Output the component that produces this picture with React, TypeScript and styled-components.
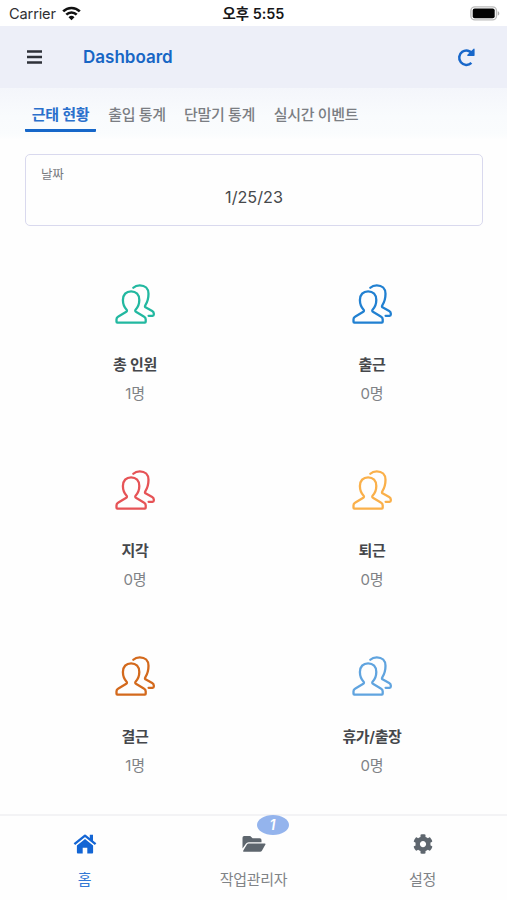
import React from 'react';
import styled, { createGlobalStyle } from 'styled-components';
import { FaCog } from 'react-icons/fa';

const GlobalStyle = createGlobalStyle`
  * { box-sizing: border-box; }
  body { margin: 0; background: #fff; }
  button { font: inherit; border: 0; padding: 0; background: none; }
`;

const Screen = styled.div`
  width: 507px;
  height: 900px;
  display: grid;
  grid-template-rows: 26px 62px 52px 86px 588px 86px;
  overflow: hidden;
  background: #fefefe;
  font-family: Inter, 'Noto Sans CJK KR', sans-serif;
  color: #43464b;
`;

const StatusBar = styled.div`
  display: grid;
  grid-template-columns: 1fr auto 1fr;
  align-items: center;
  padding: 1px 7px 0 9px;
  background: #fff;
`;

const Carrier = styled.div`
  display: flex;
  align-items: center;
  gap: 6px;
  font-size: 14.6px;
  letter-spacing: -0.15px;
  line-height: 20px;
  color: #303033;
`;

const Clock = styled.div`
  padding-right: 2px;
  font-size: 14.4px;
  font-weight: 600;
  line-height: 20px;
  color: #171719;
  white-space: nowrap;
`;

const BatterySlot = styled.div`
  display: flex;
  justify-content: flex-end;
`;

const Header = styled.header`
  display: flex;
  align-items: center;
  padding: 0 31px 0 27px;
  background: #edeff8;
`;

const Title = styled.h1`
  flex: 1;
  margin: 0 0 0 41px;
  font-size: 17px;
  font-weight: 600;
  line-height: 24px;
  color: #1766c5;
`;

const IconButton = styled.button`
  display: flex;
`;

const Tabs = styled.nav`
  display: flex;
  align-items: flex-start;
  padding: 10px 25px 0;
  background: linear-gradient(#f4f6fb, #f9fbfd 55%, #fafcfd 88%, #fefefe);
`;

const Tab = styled.button<{ $active?: boolean; $width: number }>`
  width: ${p => p.$width}px;
  height: 34px;
  font-size: 15px;
  font-weight: ${p => (p.$active ? 600 : 500)};
  letter-spacing: -0.3px;
  line-height: 31px;
  padding-top: 1px;
  white-space: nowrap;
  color: ${p => (p.$active ? '#2a70cc' : '#7b7e83')};
  border-bottom: 3px solid ${p => (p.$active ? '#1667c9' : 'transparent')};
  border-radius: 1px;
`;

const DateField = styled.div`
  height: 72px;
  margin: 14px 24px 0 25px;
  padding: 11px 15px 0;
  border: 1px solid #d9d9ee;
  border-radius: 5px;
`;

const DateLabel = styled.div`
  font-size: 12.5px;
  line-height: 18px;
  letter-spacing: -0.3px;
  color: #77797d;
`;

const DateValue = styled.div`
  margin-top: 1px;
  text-align: center;
  font-size: 16.2px;
  line-height: 24px;
  color: #46484b;
`;

const Stats = styled.main`
  display: grid;
  grid-template-columns: 237px 237px;
  grid-template-rows: repeat(3, 186px);
  justify-content: center;
  padding-top: 58px;
`;

const Stat = styled.section`
  display: flex;
  flex-direction: column;
  align-items: center;
`;

const StatName = styled.div`
  margin-top: 29px;
  font-size: 15px;
  font-weight: 600;
  line-height: 24px;
  letter-spacing: -0.35px;
  color: #45474b;
`;

const StatCount = styled.div`
  margin-top: 5px;
  font-size: 15px;
  line-height: 24px;
  letter-spacing: -0.2px;
  color: #7f8286;
`;

const BottomNav = styled.nav`
  display: grid;
  grid-template-columns: repeat(3, 1fr);
  border-top: 2px solid #f3f3f5;
`;

const NavItem = styled.button<{ $active?: boolean }>`
  display: flex;
  flex-direction: column;
  align-items: center;
  padding-top: 16px;
  color: ${p => (p.$active ? '#1365d4' : '#5e666e')};
`;

const NavIcon = styled.span`
  position: relative;
  display: flex;
  height: 24px;
  align-items: center;
`;

const NavLabel = styled.span<{ $active?: boolean }>`
  margin-top: 12px;
  font-size: 15px;
  line-height: 24px;
  letter-spacing: -0.3px;
  color: ${p => (p.$active ? '#3478d5' : '#808387')};
`;

const Badge = styled.span`
  position: absolute;
  left: 15px;
  top: -17px;
  width: 32px;
  height: 20px;
  border-radius: 50%;
  background: #94b4ed;
  color: #fff;
  font-size: 14px;
  font-weight: 600;
  font-style: italic;
  line-height: 20px;
  text-align: center;
`;

const WifiIcon = () => (
  <svg width="19" height="15" viewBox="0 0 19 15">
    <g fill="none" stroke="#111" strokeWidth="2.6">
      <path d="M1.2 5.4a11.8 11.8 0 0 1 16.6 0" />
      <path d="M4.3 8.7a7.4 7.4 0 0 1 10.4 0" />
    </g>
    <path d="M6.5 11.2a4.3 4.3 0 0 1 6 0l-3 3z" fill="#111" />
  </svg>
);

const BatteryIcon = () => (
  <svg width="30" height="15" viewBox="0 0 30 15">
    <rect x="0.9" y="0.9" width="25.6" height="13" rx="4" fill="#fff" stroke="#bcbcbc" strokeWidth="1.4" />
    <rect x="2.7" y="2.6" width="22" height="9.6" rx="2" fill="#030303" />
    <path d="M27.8 5.2v4.4c2-.7 2-3.7 0-4.4z" fill="#adadad" />
  </svg>
);

const MenuIcon = () => (
  <svg width="15" height="14" viewBox="0 0 15 14" stroke="#2e3138" strokeWidth="2.4">
    <path d="M0 1.5h15M0 7h15M0 12.5h15" />
  </svg>
);

const ReloadIcon = () => (
  <svg width="19" height="19" viewBox="0 0 19 19" fill="none" stroke="#1867ca">
    <path d="M14.4 14.9A7.2 7.2 0 1 1 15.6 6" strokeWidth="2.5" />
    <path d="M17 1.2v6.1h-6.2z" fill="#1867ca" strokeWidth="1.2" strokeLinejoin="round" />
  </svg>
);

const HomeIcon = () => (
  <svg width="24" height="20" viewBox="0 0 24 20" fill="currentColor">
    <path d="M12 5l8.1 6.6V18.5q0 .9-.9.9h-4.9v-5.6H9.7v5.6H4.8q-.9 0-.9-.9V11.600z" />
    <path d="M1.4 10.2L12 1.5l10.6 8.700" fill="none" stroke="#fefefe" strokeWidth="4" />
    <path d="M1.4 10.200L12 1.600l10.600 8.600" fill="none" stroke="currentColor" strokeWidth="2.300" strokeLinejoin="round" />
    <path d="M16.800 .8h3.200v7.300l-3.200-2.600z" />
  </svg>
);

const FolderIcon = () => (
  <svg width="24" height="18" viewBox="0 0 24 18" fill="currentColor">
    <path d="M.5 13.400V2.700Q.5 1 2.200 1h6l2.400 2.300h7.200q1.700 0 1.700 1.700v2.300H6.600q-1.800 0-2.700 1.500z" />
    <path d="M6.700 8.400h16q1.200 0 .7 1.100l-3.500 6.200q-.6 1.100-1.800 1.100H2q-1.200 0-.7-1.200l3.600-6.100q.6-1.100 1.800-1.100z" />
  </svg>
);

const PeopleIcon = ({ color }: { color: string }) => (
  <svg width="40" height="40" viewBox="0 0 40 40" fill="none" stroke={color} strokeWidth="2.3" strokeLinejoin="round" strokeLinecap="round">
    <path d="M1.500 37.800v-2.500q0-1.800 1.500-2.600l7.900-4.600q1.700-1 .7-2.400C9 22.900 7.900 19.800 7.900 16c0-5.300 3.300-8.700 8.200-8.700s8.200 3.400 8.200 8.700c0 3.800-1.100 6.900-3.700 9.700q-1 1.400.7 2.400l7.900 4.600q1.500.8 1.500 2.600v2.500q0 .8-.8.8H2.300q-.8 0-.8-.8z" />
    <path d="M18.300 3.800C20 2.100 22.300 1.300 24.800 1.300c5.300 0 8.700 3.400 8.700 8.500 0 4.700-.9 8.100-3.200 11.500q-.9 1.500.6 2.300l6.300 3.500q1.600.9 1.600 2.500v1q0 1.200-1.200 1.200h-4" />
  </svg>
);

const tabs = [
  { label: '근태 현황', width: 71, active: true },
  { label: '출입 통계', width: 82 },
  { label: '단말기 통계', width: 83 },
  { label: '실시간 이벤트', width: 110 },
];

const stats = [
  { name: '총 인원', count: '1명', color: '#22b8a0' },
  { name: '출근', count: '0명', color: '#2180d1' },
  { name: '지각', count: '0명', color: '#e65356' },
  { name: '퇴근', count: '0명', color: '#fab04a' },
  { name: '결근', count: '1명', color: '#d3691c' },
  { name: '휴가/출장', count: '0명', color: '#60a4df' },
];

export default function App() {
  return (
    <>
      <GlobalStyle />
      <Screen>
        <StatusBar>
          <Carrier>Carrier <WifiIcon /></Carrier>
          <Clock>오후 5:55</Clock>
          <BatterySlot><BatteryIcon /></BatterySlot>
        </StatusBar>
        <Header>
          <IconButton aria-label="메뉴"><MenuIcon /></IconButton>
          <Title>Dashboard</Title>
          <IconButton aria-label="새로고침"><ReloadIcon /></IconButton>
        </Header>
        <Tabs>
          {tabs.map(t => (
            <Tab key={t.label} $active={t.active} $width={t.width}>{t.label}</Tab>
          ))}
        </Tabs>
        <DateField>
          <DateLabel>날짜</DateLabel>
          <DateValue>1/25/23</DateValue>
        </DateField>
        <Stats>
          {stats.map(s => (
            <Stat key={s.name}>
              <PeopleIcon color={s.color} />
              <StatName>{s.name}</StatName>
              <StatCount>{s.count}</StatCount>
            </Stat>
          ))}
        </Stats>
        <BottomNav>
          <NavItem $active>
            <NavIcon><HomeIcon /></NavIcon>
            <NavLabel $active>홈</NavLabel>
          </NavItem>
          <NavItem>
            <NavIcon><FolderIcon /><Badge>1</Badge></NavIcon>
            <NavLabel>작업관리자</NavLabel>
          </NavItem>
          <NavItem>
            <NavIcon><FaCog size={20} /></NavIcon>
            <NavLabel>설정</NavLabel>
          </NavItem>
        </BottomNav>
      </Screen>
    </>
  );
}
